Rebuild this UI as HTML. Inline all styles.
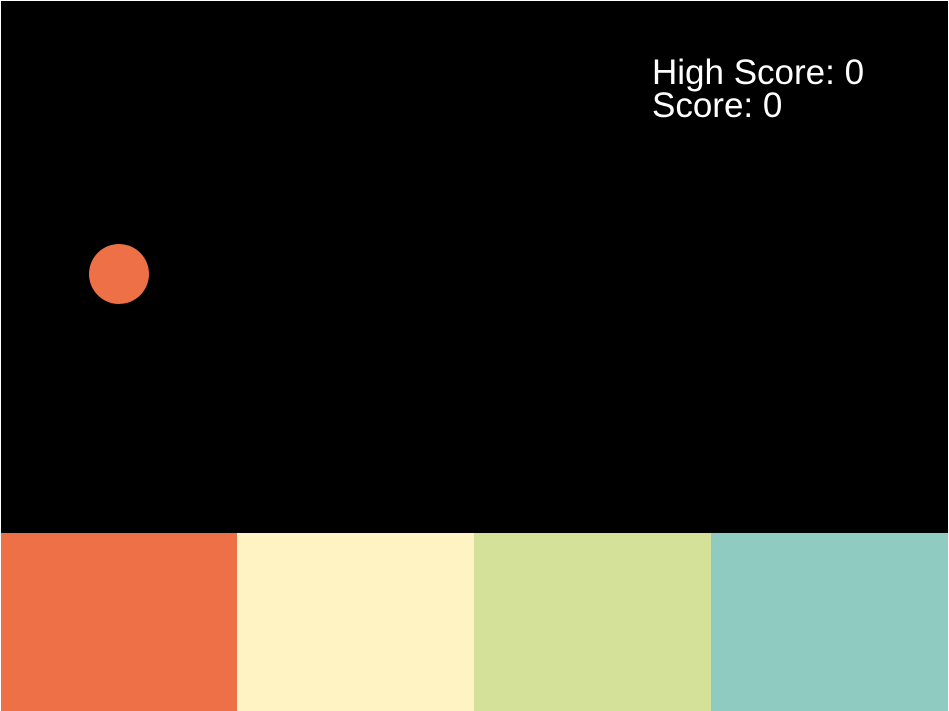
<!DOCTYPE html>
<html><head><style>
html,body{margin:0;padding:0;width:949px;height:711px;overflow:hidden;background:#fff}
#g{position:absolute;left:1px;top:1px;width:947px;height:532px;background:#000}
.t{position:absolute;left:652px;color:#fff;font-family:"Liberation Sans",sans-serif;font-size:35px;line-height:33px;white-space:nowrap}
.b{position:absolute;top:533px;height:178px}
</style></head><body>
<div id="g"></div>
<div class="t" style="top:56px">High Score: 0<br>Score: 0</div>
<div style="position:absolute;left:89px;top:244px;width:60px;height:60px;border-radius:50%;background:#ed7047"></div>
<div class="b" style="left:1px;width:236px;background:#ed7047"></div>
<div class="b" style="left:237px;width:237px;background:#fff3c4"></div>
<div class="b" style="left:474px;width:237px;background:#d3e298"></div>
<div class="b" style="left:711px;width:237px;background:#8fcbc1"></div>
</body></html>
